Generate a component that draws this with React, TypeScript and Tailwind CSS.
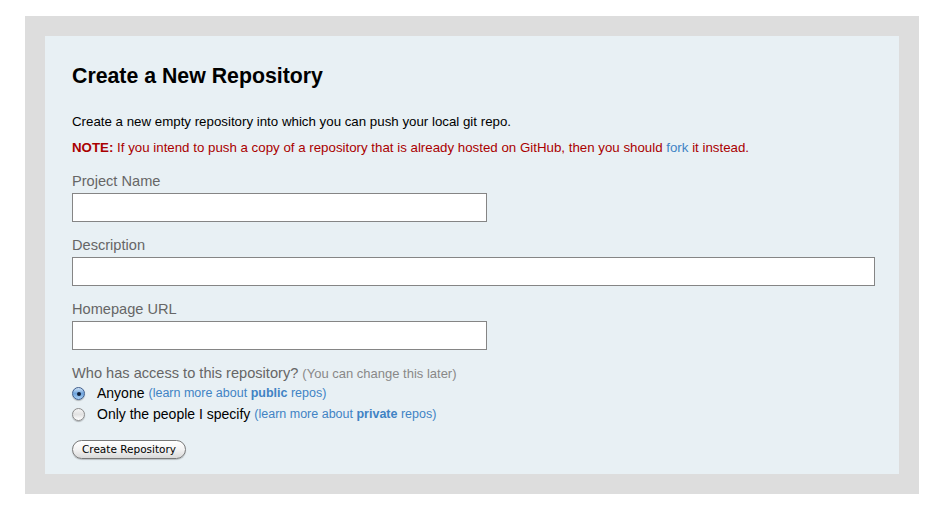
import React from 'react';

// Simple aqua-ish radio button drawn with css
const Radio: React.FC<{ checked?: boolean }> = ({ checked }) => (
  <span
    className={`relative inline-block w-[13px] h-[13px] shrink-0 rounded-full border ${
      checked
        ? 'border-[#3f5d8c] bg-gradient-to-b from-[#cfe3f7] via-[#6fa4dc] to-[#a9d0f5]'
        : 'border-[#8c8c8c] bg-gradient-to-b from-[#f4f4f4] via-[#e2e2e2] to-[#ffffff]'
    } shadow-[0_1px_1px_rgba(0,0,0,0.25)]`}
  >
    {checked && <span className="absolute left-[3.5px] top-[3.5px] w-[4px] h-[4px] rounded-full bg-[#10203a]" />}
  </span>
);

const Field: React.FC<{ label: string; wide?: boolean }> = ({ label, wide }) => (
  <div className="mb-[15px]">
    <label className="block text-[14.6px] leading-[17px] text-[#666666] mb-[3px]">{label}</label>
    <input
      type="text"
      className={`block h-[29px] bg-white border border-[#858585] outline-none ${wide ? 'w-[803px]' : 'w-[415px]'}`}
    />
  </div>
);

export default function App() {
  return (
    <div className="w-[946px] h-[522px] bg-white pt-4 pl-[25px] font-['Liberation_Sans',Arial,sans-serif]">
      <div className="w-[894px] bg-[#dddddd] p-5">
        <div className="bg-[#e8f0f4] pl-[27px] pr-6 pt-[27px] pb-[14px]">
          <h1 className="text-[21.3px] leading-[26px] font-bold text-black">Create a New Repository</h1>

          <p className="mt-[25px] text-[13.3px] leading-[16px] text-black">
            Create a new empty repository into which you can push your local git repo.
          </p>
          <p className="mt-[10px] text-[13.3px] leading-[16px] text-[#aa0000]">
            <strong className="font-bold">NOTE:</strong> If you intend to push a copy of a repository that is already
            hosted on GitHub, then you should <a className="text-[#4183c4]">fork</a> it instead.
          </p>

          {/* form fields */}
          <div className="mt-[17px]">
            <Field label="Project Name" />
            <Field label="Description" wide />
            <Field label="Homepage URL" />
          </div>

          <div className="text-[14.6px] leading-[17px] text-[#666666]">
            Who has access to this repository? <span className="text-[13px] text-[#888888]">(You can change this later)</span>
          </div>
          <div className="flex flex-col mt-[1px]">
            <label className="flex items-center h-[21px] text-[14px] text-black">
              <Radio checked />
              <span className="ml-[12px]">Anyone</span>
              <span className="ml-[4px] text-[12.5px] text-[#4183c4]">
                (learn more about <b>public</b> repos)
              </span>
            </label>
            <label className="flex items-center h-[21px] text-[14px] text-black">
              <Radio />
              <span className="ml-[12px]">Only the people I specify</span>
              <span className="ml-[4px] text-[12.5px] text-[#4183c4]">
                (learn more about <b>private</b> repos)
              </span>
            </label>
          </div>

          <button className="mt-[15px] h-[19px] w-[114px] rounded-full border border-[#7a7a7a] bg-gradient-to-b from-white via-[#f3f3f3] to-[#d9d9d9] shadow-[0_1px_1px_rgba(0,0,0,0.2)] text-[10.5px] leading-[17px] text-black font-['DejaVu_Sans',sans-serif]">
            Create Repository
          </button>
        </div>
      </div>
    </div>
  );
}
